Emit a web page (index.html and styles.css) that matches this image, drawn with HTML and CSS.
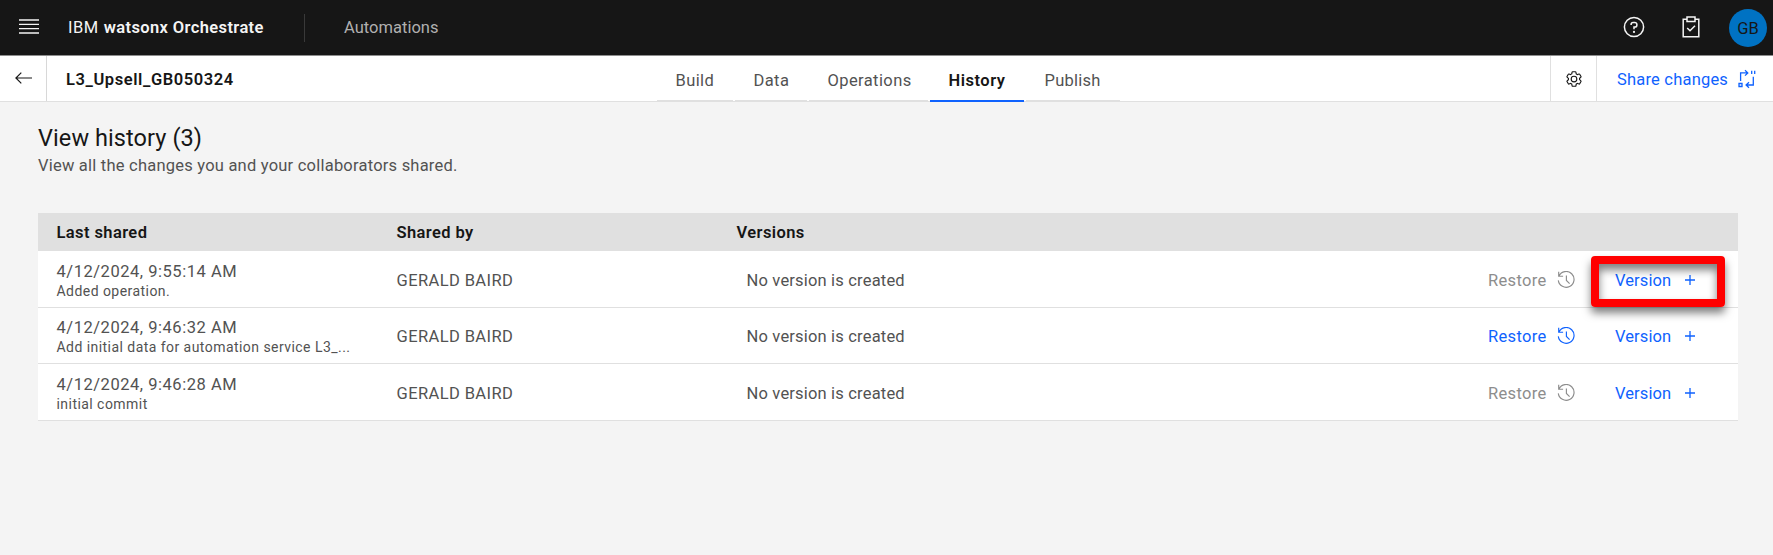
FILE: index.html
```html
<!DOCTYPE html>
<html lang="en">
<head>
<meta charset="utf-8">
<title>View history</title>
<link rel="stylesheet" href="styles.css">
</head>
<body>
<svg class="defs" aria-hidden="true">
  <symbol id="restore" viewBox="0 0 18 18">
    <path d="M1.7 .8v4.4h4.4M2 5A7.9 7.9 0 1 1 1.3 9.4M9.4 4.4v5l3.2 3.2" fill="none" stroke="currentColor" stroke-width="1.15"/>
  </symbol>
  <symbol id="plus" viewBox="0 0 10 10">
    <path d="M5 0v10M0 5h10" fill="none" stroke="currentColor" stroke-width="1.3"/>
  </symbol>
</svg>
<header class="topbar">
  <button class="menu" aria-label="Menu"><svg viewBox="0 0 20 15" fill="none" stroke="currentColor" stroke-width="1.3"><path d="M0 1h20M0 5.3h20M0 9.7h20M0 14h20"/></svg></button>
  <div class="brand"><span class="ibm">IBM</span><b class="product">watsonx Orchestrate</b></div>
  <span class="divider"></span>
  <span class="section">Automations</span>
  <div class="tools">
    <svg class="help" viewBox="0 0 22 22" fill="none" stroke="currentColor" stroke-width="1.5"><circle cx="11" cy="11" r="9.6"/><path d="M8.1 8.9V8.4a2 2 0 0 1 2-2h1.7a2.1 2.1 0 0 1 2.1 2.1v.4a2.1 2.1 0 0 1-2.1 2.1H11v2.2"/><circle cx="11" cy="15.9" r="1.1" fill="currentColor" stroke="none"/></svg>
    <svg class="tasks" viewBox="0 0 18 22" fill="none" stroke="currentColor" stroke-width="1.5"><path d="M5 3.2H1.2v17.6h15.6V3.2H13M5 1.1h8v4.3H5zM5.2 12l2.8 2.8 5-5"/></svg>
    <span class="avatar">GB</span>
  </div>
</header>
<nav class="subbar">
  <button class="back" aria-label="Back"><svg viewBox="0 0 17 12" fill="none" stroke="currentColor" stroke-width="1.2"><path d="M17 6H1M6.3.6.9 6l5.4 5.4"/></svg></button>
  <h1 class="name">L3_Upsell_GB050324</h1>
  <div class="tabs">
    <a class="tab build">Build</a><a class="tab data">Data</a><a class="tab operations">Operations</a><a class="tab history">History</a><a class="tab publish">Publish</a>
  </div>
  <button class="settings" aria-label="Settings"><svg viewBox="0 0 32 32" fill="currentColor"><path d="M27 16.76v-1.53l1.92-1.68A2 2 0 0 0 29.3 11l-2.36-4a2 2 0 0 0-1.73-1 2 2 0 0 0-.64.1l-2.43.82a11.35 11.35 0 0 0-1.31-.75l-.51-2.52a2 2 0 0 0-2-1.61h-4.68a2 2 0 0 0-2 1.61l-.51 2.52a11.48 11.48 0 0 0-1.32.75l-2.38-.86A2 2 0 0 0 6.79 6a2 2 0 0 0-1.73 1L2.7 11a2 2 0 0 0 .41 2.51L5 15.24v1.53l-1.89 1.68A2 2 0 0 0 2.7 21l2.36 4a2 2 0 0 0 1.73 1 2 2 0 0 0 .64-.1l2.43-.82a11.35 11.35 0 0 0 1.31.75l.51 2.52a2 2 0 0 0 2 1.61h4.72a2 2 0 0 0 2-1.61l.51-2.52a11.48 11.48 0 0 0 1.32-.75l2.42.82a2 2 0 0 0 .64.1 2 2 0 0 0 1.73-1l2.28-4a2 2 0 0 0-.41-2.51ZM25.21 24l-3.43-1.16a8.86 8.86 0 0 1-2.71 1.57L18.36 28h-4.72l-.71-3.55a9.36 9.36 0 0 1-2.7-1.57L6.79 24l-2.36-4 2.72-2.4a8.9 8.9 0 0 1 0-3.13L4.43 12l2.36-4 3.43 1.16a8.86 8.86 0 0 1 2.71-1.57L13.64 4h4.72l.71 3.55a9.36 9.36 0 0 1 2.7 1.57L25.21 8l2.36 4-2.72 2.4a8.9 8.9 0 0 1 0 3.13L27.57 20Z"/><path d="M16 22a6 6 0 1 1 6-6 5.94 5.94 0 0 1-6 6Zm0-10a3.91 3.91 0 0 0-4 4 3.91 3.91 0 0 0 4 4 3.91 3.91 0 0 0 4-4 3.91 3.91 0 0 0-4-4Z"/></svg></button>
  <a class="share"><span class="share-label">Share changes</span><svg viewBox="0 0 18 18" fill="none" stroke="currentColor" stroke-width="1.3"><path d="M2.6 11V2.9h7.4M7 .2l2.8 2.7L7 5.6M15.3 6.8v8.2H8.2M11 12.300 8.1 15l2.900 2.700"/><path d="M1 13.5h3v3H1zM13.7.8v3.2M16.700.8v3.2"/></svg></a>
</nav>
<main class="page">
  <h2 class="title">View history (3)</h2>
  <p class="subtitle">View all the changes you and your collaborators shared.</p>
  <section class="table">
    <div class="row head"><span>Last shared</span><span>Shared by</span><span>Versions</span></div>
    <div class="row">
      <div><div class="date">4/12/2024, 9:55:14 AM</div><div class="note">Added operation.</div></div>
      <span class="who">GERALD BAIRD</span><span class="ver">No version is created</span>
      <div class="actions"><span class="restore off"><span>Restore</span><svg><use href="#restore"/></svg></span><span class="version"><span>Version</span><svg><use href="#plus"/></svg><span class="callout"></span></span></div>
    </div>
    <div class="row">
      <div><div class="date">4/12/2024, 9:46:32 AM</div><div class="note">Add initial data for automation service L3_...</div></div>
      <span class="who">GERALD BAIRD</span><span class="ver">No version is created</span>
      <div class="actions"><span class="restore"><span>Restore</span><svg><use href="#restore"/></svg></span><span class="version"><span>Version</span><svg><use href="#plus"/></svg></span></div>
    </div>
    <div class="row">
      <div><div class="date">4/12/2024, 9:46:28 AM</div><div class="note">initial commit</div></div>
      <span class="who">GERALD BAIRD</span><span class="ver">No version is created</span>
      <div class="actions"><span class="restore off"><span>Restore</span><svg><use href="#restore"/></svg></span><span class="version"><span>Version</span><svg><use href="#plus"/></svg></span></div>
    </div>
  </section>
</main>
</body>
</html>
```
FILE: styles.css
```css
* { box-sizing: border-box; margin: 0; padding: 0; }
body { background: #f4f4f4; color: #161616; font: 400 16.5px/20px Roboto, sans-serif; height: 555px; overflow: hidden; white-space: nowrap; letter-spacing: .5px; }
button { background: none; border: 0; color: inherit; }
svg { display: block; flex: none; overflow: visible; }
.defs { position: absolute; width: 0; height: 0; }
.topbar { height: 55px; background: #161616; color: #f4f4f4; display: flex; align-items: center; }
.menu { width: 20px; height: 15px; margin: -2px 0 0 18.5px; }
.menu svg { width: 20px; height: 15px; }
.brand { display: flex; margin-left: 29.5px; width: 236px; gap: 5px; }
.product { font-weight: 600; letter-spacing: .38px; }
.divider { width: 1px; height: 28px; background: #393939; }
.section { margin-left: 39px; color: #b0b0b0; letter-spacing: .02px; }
.tools { margin-left: auto; display: flex; align-items: center; padding-right: 6px; }
.help { width: 22px; height: 22px; margin: -1px 37px 0 0; }
.tasks { width: 18px; height: 22px; margin: -1px 29px 0 0; }
.avatar { width: 38px; height: 38px; border-radius: 50%; background: #0072c3; color: #161616; display: flex; align-items: center; justify-content: center; letter-spacing: 0; padding-top: 2px; }
.subbar { height: 47px; background: #fff; border-top: 1px solid #8d8d8d; border-bottom: 1px solid #e0e0e0; display: flex; }
.back { width: 47px; border-right: 1px solid #d8d8d8; padding: 0 0 1px 15px; display: flex; align-items: center; }
.back svg { width: 17px; height: 12px; }
.name { font-size: 16.5px; font-weight: 600; line-height: 47px; padding-left: 19px; width: 610px; letter-spacing: .58px; }
.tabs { display: flex; gap: 2px; height: 47px; color: #525252; }
.tab { border-bottom: 1px solid #e0e0e0; height: 45px; padding: 15px 0 0 18.5px; letter-spacing: .4px; }
.build { width: 76px; }
.data { width: 72px; }
.operations { width: 119px; }
.history { width: 94px; height: 46px; border-bottom: 2px solid #0f62fe; color: #161616; font-weight: 600; letter-spacing: .5px; }
.publish { width: 94px; letter-spacing: .25px; }
.settings { margin-left: auto; width: 46px; border-left: 1px solid #e0e0e0; display: flex; align-items: center; padding: 0 0 0 14px; }
.settings svg { width: 18px; height: 18px; }
.share { width: 177px; border-left: 1px solid #e0e0e0; display: flex; align-items: center; color: #0f62fe; padding-left: 20px; letter-spacing: .2px; }
.share-label { padding-top: 2px; }
.share svg { width: 18px; height: 18px; margin-left: auto; margin-right: 17px; }
.page { padding: 22px 35px 0 38px; }
.title { font-size: 23.5px; line-height: 28px; font-weight: 400; letter-spacing: .08px; }
.subtitle { color: #525252; margin-top: 4px; line-height: 20px; letter-spacing: .22px; }
.table { margin-top: 37px; }
.row { display: grid; grid-template-columns: 340px 340px 1fr auto; align-items: center; height: 56.5px; background: #fff; border-bottom: 1px solid #e0e0e0; padding: 4px 0 0 18.5px; color: #525252; }
.head { height: 38px; background: #e0e0e0; color: #161616; font-weight: 600; padding-top: 2px; letter-spacing: .4px; }
.date { line-height: 20px; letter-spacing: .53px; padding-top: 1px; }
.note { font-size: 14px; line-height: 19px; letter-spacing: .45px; }
.who { letter-spacing: .4px; }
.ver { padding-left: 10px; letter-spacing: .18px; }
.actions { display: flex; color: #0f62fe; }
.restore { display: flex; align-items: center; justify-content: space-between; width: 87px; letter-spacing: .35px; }
.restore svg { width: 18px; height: 18px; margin-top: -2px; }
.off { color: #8d8d8d; }
.version { position: relative; display: flex; align-items: center; justify-content: space-between; width: 80px; margin: 0 43px 0 40px; letter-spacing: .1px; }
.version > svg { width: 10px; height: 10px; margin-top: -2px; }
.callout { position: absolute; left: -24px; top: -15px; width: 134px; height: 51px; border: 8px solid #f00; border-radius: 4px; box-shadow: 0 6px 9px rgba(0,0,0,.5), inset 0 6px 9px rgba(0,0,0,.5); }
```
